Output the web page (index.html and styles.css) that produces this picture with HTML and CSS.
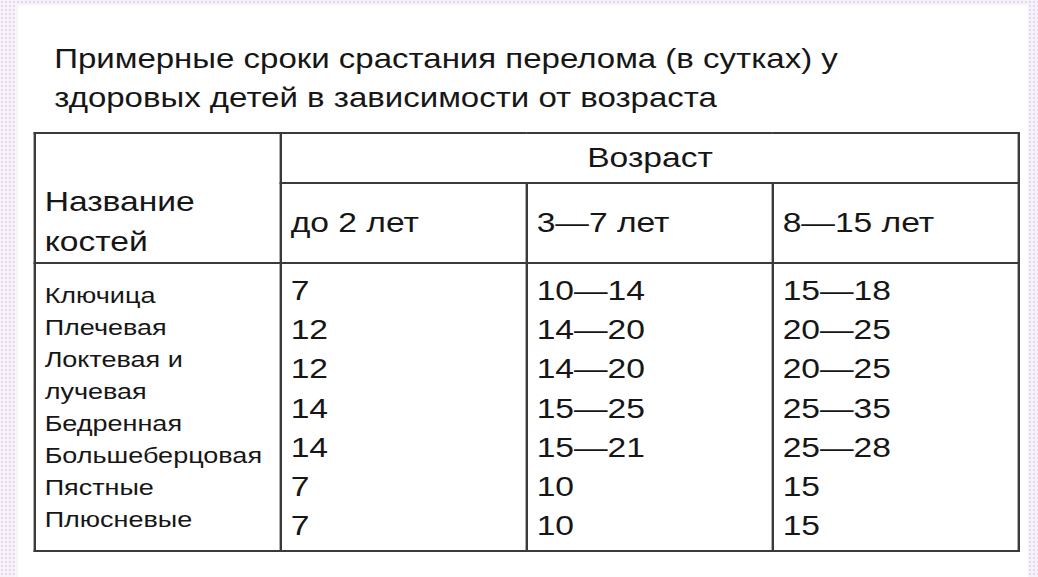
FILE: index.html
```html
<!DOCTYPE html>
<html lang="ru">
<head>
<meta charset="utf-8">
<title>Сроки срастания переломов у детей</title>
<link rel="stylesheet" href="styles.css">
</head>
<body>
<div class="slide">
  <div class="panel">
    <h1 class="title">Примерные сроки срастания перелома (в сутках) у<br>здоровых детей в зависимости от возраста</h1>
    <table class="grid">
      <colgroup><col><col><col><col></colgroup>
      <thead>
        <tr class="r-age">
          <th class="h-name" rowspan="2">Название<br>костей</th>
          <th class="h-age" colspan="3">Возраст</th>
        </tr>
        <tr class="r-groups">
          <th class="h-group">до 2 лет</th>
          <th class="h-group">3—7 лет</th>
          <th class="h-group">8—15 лет</th>
        </tr>
      </thead>
      <tbody>
        <tr class="r-body">
          <td class="c-names">Ключица<br>Плечевая<br>Локтевая и<br>лучевая<br>Бедренная<br>Большеберцовая<br>Пястные<br>Плюсневые</td>
          <td class="c-num">7<br>12<br>12<br>14<br>14<br>7<br>7</td>
          <td class="c-num">10—14<br>14—20<br>14—20<br>15—25<br>15—21<br>10<br>10</td>
          <td class="c-num">15—18<br>20—25<br>20—25<br>25—35<br>25—28<br>15<br>15</td>
        </tr>
      </tbody>
    </table>
  </div>
</div>
</body>
</html>
```
FILE: styles.css
```css
html, body {
  margin: 0;
  padding: 0;
}

body {
  width: 1038px;
  height: 577px;
  overflow: hidden;
  background-color: #f7f2f9;
  background-image: radial-gradient(circle, #e6d7ee 0.9px, transparent 1.4px);
  background-size: 4px 4px;
  font-family: "Liberation Sans", Arial, sans-serif;
  color: #161616;
}

/* the source slide is shown horizontally stretched */
.slide {
  width: 865px;
  height: 577px;
  box-sizing: border-box;
  padding: 5px 8.3px 0 13.3px;
  transform: scaleX(1.2);
  transform-origin: 0 0;
}

.panel {
  height: 100%;
  box-sizing: border-box;
  background: #ffffff;
  box-shadow: inset 3px 0 3px -2px #efeaf1;
  padding: 34px 0 0 14.9px;
}

.title {
  margin: 0 0 15px 17px;
  font-size: 27.5px;
  font-weight: normal;
  line-height: 39px;
}

.grid {
  border-collapse: collapse;
  table-layout: fixed;
  width: 822px;
}

.grid th,
.grid td {
  border: 2px solid #3a3a3a;
  padding: 0 0 0 7px;
  text-align: left;
  font-weight: normal;
  font-size: 28px;
  line-height: 40px;
}

.r-age { height: 50px; }
.r-groups { height: 80px; }
.r-body { height: 288px; }

.h-name {
  vertical-align: bottom;
  padding-bottom: 5px;
}

.grid .h-age {
  text-align: center;
  vertical-align: middle;
  padding: 0;
}

.h-group {
  vertical-align: middle;
  padding-top: 10px;
}

.grid .c-names {
  vertical-align: top;
  padding-top: 15.5px;
  font-size: 22.5px;
  line-height: 32.1px;
}

.grid .c-num {
  vertical-align: top;
  padding-top: 6.7px;
  line-height: 39.3px;
}
```
